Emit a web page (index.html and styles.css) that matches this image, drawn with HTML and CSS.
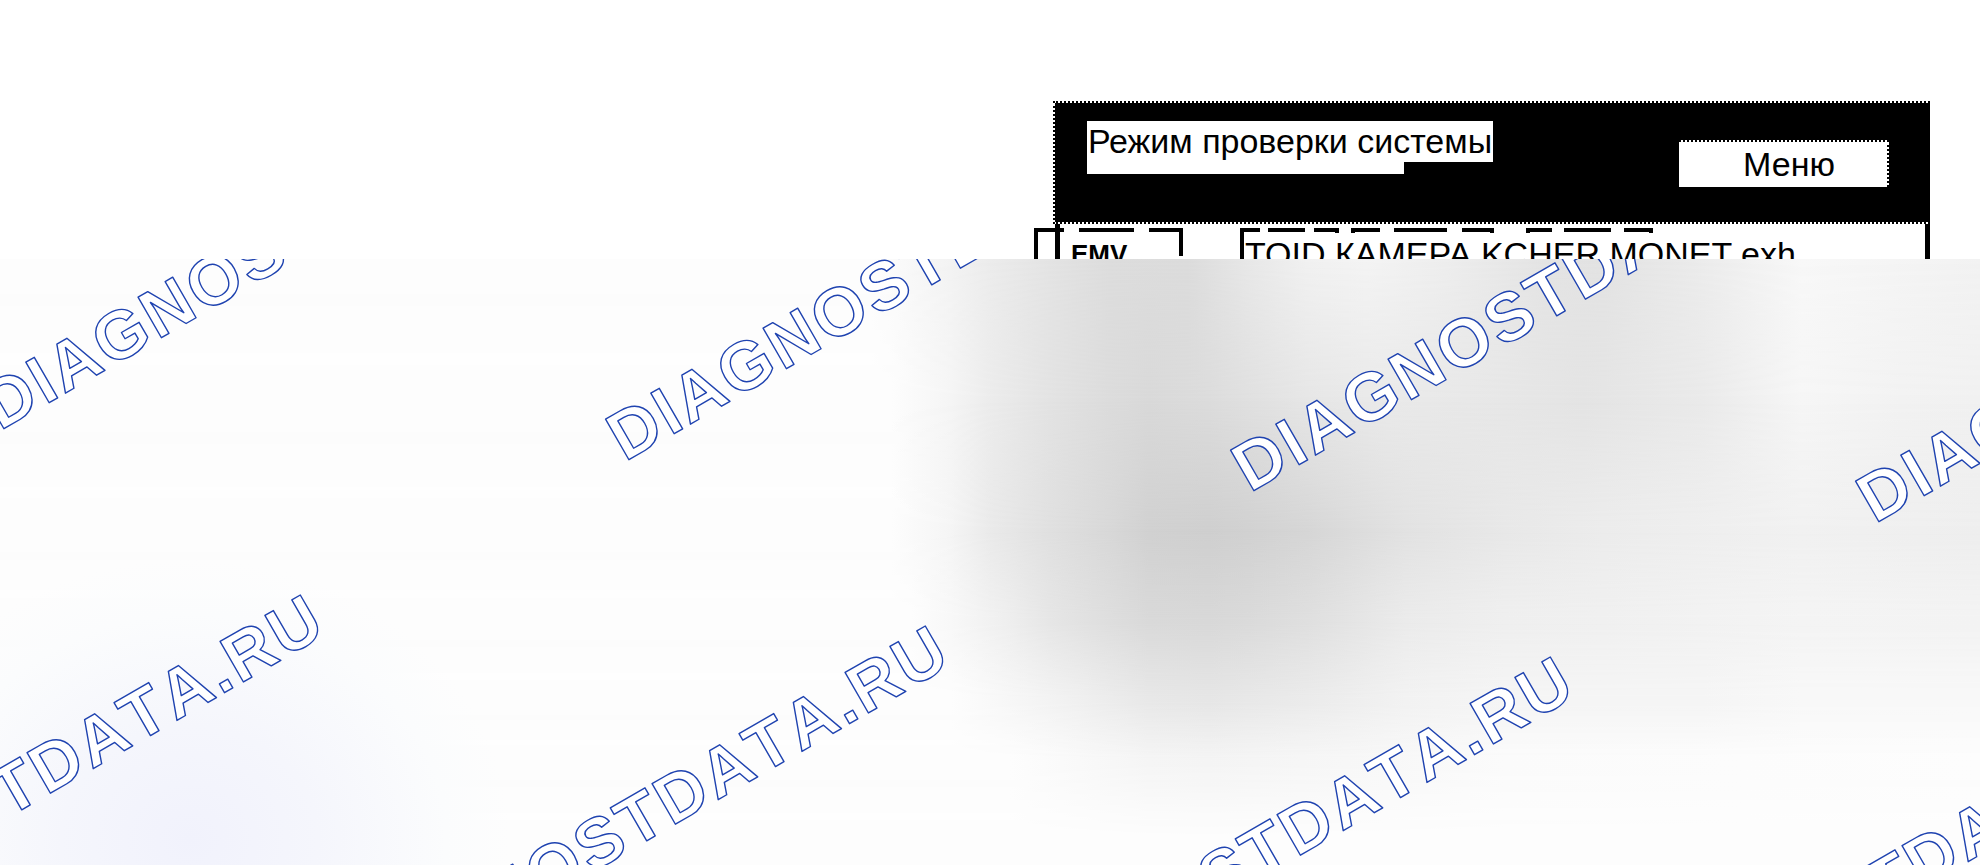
FILE: index.html
```
<!DOCTYPE html>
<html lang="ru">
<head>
	<meta charset="UTF-8">
	<title>Режим проверки системы</title>
	<link rel="stylesheet" href="styles.css">
</head>
<body>
	<div class="page">
		<div class="top">
			<div class="screen">
				<div class="screen-head">
					<h1 class="screen-title">Режим проверки системы</h1>
					<button type="button" class="menu">Меню</button>
				</div>
				<div class="screen-body">
					<div class="cell cell-code">
						<svg class="frame" width="149" height="40" aria-hidden="true">
							<path d="M2 40V2H30M45 2H100M115 2H147V28"/>
						</svg>
						<span>EMV</span>
					</div>
					<div class="cell cell-file">
						<svg class="frame" width="420" height="40" aria-hidden="true">
							<path d="M2 40V2H20M28 2H65M74 2H97V5M113 5V2H140M154 2H207M222 2H252V5M288 5V2H312M324 2H371M384 2H411V5"/>
						</svg>
						<span>TOID КАМЕРА KCHER MONET exh</span>
					</div>
				</div>
			</div>
		</div>
		<div class="haze">
			<div class="layer row-1"></div>
			<div class="layer row-2"></div>
			<div class="layer row-3"></div>
			<div class="layer row-4"></div>
			<div class="layer row-5"></div>
			<div class="layer row-6"></div>
			<div class="layer row-7"></div>
			<div class="layer tint"></div>
			<svg class="marks" width="100%" height="100%">
				<text transform="translate(0 172) rotate(-30)">DIAGNOSTDATA.RU</text>
				<text transform="translate(625 203) rotate(-30)">DIAGNOSTDATA.RU</text>
				<text transform="translate(1250 234) rotate(-30)">DIAGNOSTDATA.RU</text>
				<text transform="translate(1875 265) rotate(-30)">DIAGNOSTDATA.RU</text>
				<text transform="translate(-285 728) rotate(-30)">DIAGNOSTDATA.RU</text>
				<text transform="translate(340 759) rotate(-30)">DIAGNOSTDATA.RU</text>
				<text transform="translate(965 790) rotate(-30)">DIAGNOSTDATA.RU</text>
				<text transform="translate(1590 821) rotate(-30)">DIAGNOSTDATA.RU</text>
			</svg>
		</div>
	</div>
</body>
</html>
```
FILE: styles.css
```
* {
	box-sizing: border-box;
}

body {
	margin: 0;
	background: #fff;
	color: #000;
	font-family: "Liberation Sans", Arial, sans-serif;
}

.page {
	display: flex;
	flex-direction: column;
	height: 100vh;
	overflow: hidden;
}

/* piece of the terminal screen */
.top {
	flex: none;
	height: 259px;
	padding: 101px 50px 0 0;
	overflow: hidden;
}

.screen {
	width: 44.3vw;
	margin-left: auto;
}

.screen-head {
	display: flex;
	justify-content: space-between;
	align-items: flex-start;
	height: 123px;
	padding: 18px 39px 0 32px;
	background: #000;
	background-clip: padding-box;
	border: 2px dotted #000;
	border-right: 2px solid #000;
}

.screen-title {
	margin: 0;
	height: 53px;
	padding: 0 1px;
	font-size: 34px;
	line-height: 41px;
	font-weight: normal;
	white-space: nowrap;
	background: linear-gradient(#fff, #fff) 0 0 / 100% 41px no-repeat,
		linear-gradient(#fff, #fff) 0 0 / 317px 100% no-repeat;
}

.menu {
	width: 210px;
	height: 47px;
	margin-top: 19px;
	padding: 0 0 0 12px;
	border: 2px dotted #000;
	border-left: 0;
	border-bottom: 0;
	border-radius: 0;
	background: #fff;
	color: #000;
	font: 34px "Liberation Sans", Arial, sans-serif;
}

.screen-body {
	display: flex;
	gap: 57px;
	height: 60px;
	margin-left: 2px;
	padding-top: 4px;
	border-left: 5px solid #000;
	border-right: 5px solid #000;
}

.cell {
	position: relative;
	height: 40px;
	white-space: nowrap;
}

.cell-code {
	width: 149px;
	margin-left: -26px;
	padding: 10px 0 0 37px;
	font-size: 26px;
	line-height: 32px;
	font-weight: bold;
}

.cell-file {
	padding: 6px 0 0 5px;
	font-size: 34px;
	line-height: 40px;
}

.frame {
	position: absolute;
	top: 0;
	left: 0;
	fill: none;
	stroke: #000;
	stroke-width: 4;
}

/* grey haze: every row fades into the next one */
.haze {
	position: relative;
	flex: 1;
	overflow: hidden;
	background: #fdfdfd;
}

.layer {
	position: absolute;
	top: 0;
	left: 0;
	right: 0;
	bottom: 0;
}

.row-1 {
	background: linear-gradient(90deg, #fdfdfd 44%, #f3f3f3 48%, #ececec 50%, #e4e4e4 53%, #dddddd 56%, #dcdcdc 60%, #e8e8e8 63%, #f1f1f1 66%, #f4f4f4 69%, #eeeeee 73%, #e4e4e4 78%, #e3e3e3 81%, #ececec 86%, #f8f8f8 91%, #f6f6f6 94%, #f2f2f2);
}

.row-2 {
	background: linear-gradient(90deg, #fdfdfd 45%, #f5f5f5 48%, #ececec 50%, #e3e3e3 53%, #dcdcdc 56%, #d9d9d9 58%, #dcdcdc 61%, #e6e6e6 66%, #eaeaea 70%, #e7e7e7 76%, #e4e4e4 80%, #eaeaea 86%, #f6f6f6 91%, #f2f2f2 96%, #f1f1f1);
	-webkit-mask-image: linear-gradient(transparent 0, #000 141px);
	mask-image: linear-gradient(transparent 0, #000 141px);
}

.row-3 {
	background: linear-gradient(90deg, #fdfdfd 45%, #f5f5f5 48%, #eaeaea 50%, #e0e0e0 53%, #d8d8d8 56%, #d1d1d1 58%, #cfcfcf 61%, #d1d1d1 63%, #d6d6d6 66%, #e2e2e2 71%, #e8e8e8 76%, #ececec 81%, #f1f1f1 91%, #eeeeee);
	-webkit-mask-image: linear-gradient(transparent 141px, #000 271px);
	mask-image: linear-gradient(transparent 141px, #000 271px);
}

.row-4 {
	background: linear-gradient(90deg, #fdfdfd 46%, #f8f8f8 48%, #eeeeee 51%, #e6e6e6 53%, #dedede 56%, #d9d9d9 58%, #d8d8d8 61%, #dadada 63%, #dfdfdf 66%, #ebebeb 71%, #efefef 76%, #f0f0f0 81%, #f4f4f4 91%, #f3f3f3);
	-webkit-mask-image: linear-gradient(transparent 271px, #000 361px);
	mask-image: linear-gradient(transparent 271px, #000 361px);
}

.row-5 {
	background: linear-gradient(90deg, #fdfdfd 48%, #f3f3f3 53%, #e8e8e8 58%, #e6e6e6 61%, #ebebeb 66%, #f2f2f2 71%, #f5f5f5 76%, #f5f5f5 86%, #f8f8f8 91%, #f8f8f8);
	-webkit-mask-image: linear-gradient(transparent 361px, #000 441px);
	mask-image: linear-gradient(transparent 361px, #000 441px);
}

.row-6 {
	background: linear-gradient(90deg, #fdfdfd 51%, #f5f5f5 58%, #f4f4f4 61%, #f7f7f7 68%, #fbfbfb 76%, #fdfdfd);
	-webkit-mask-image: linear-gradient(transparent 441px, #000 501px);
	mask-image: linear-gradient(transparent 441px, #000 501px);
}

.row-7 {
	background: #fdfdfd;
	-webkit-mask-image: linear-gradient(transparent 501px, #000 581px);
	mask-image: linear-gradient(transparent 501px, #000 581px);
}

.tint {
	background: radial-gradient(ellipse 320px 280px at 190px 580px, #f1f2fc, #f5f6fc 40%, #fbfcfd 80%, transparent);
}

.marks {
	position: absolute;
	top: 0;
	left: 0;
	font-size: 68px;
	font-weight: bold;
	font-kerning: none;
	letter-spacing: 3px;
	fill: #fff;
	stroke: #1f43b0;
	stroke-width: 1.4;
	stroke-linejoin: round;
}
```
